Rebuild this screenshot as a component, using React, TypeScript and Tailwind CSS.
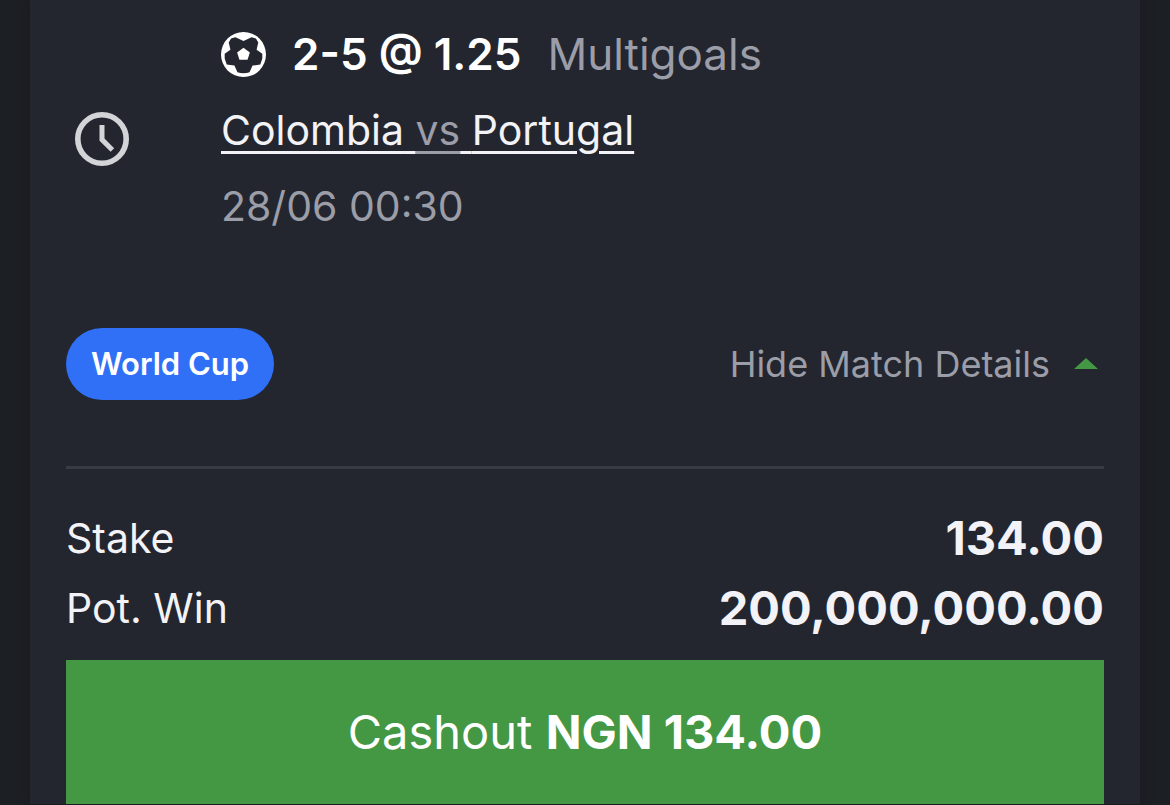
import { useState } from "react";

const totals = [
  { label: "Stake", value: "134.00" },
  { label: "Pot. Win", value: "200,000,000.00" },
];

function ClockIcon() {
  return (
    <svg
      viewBox="0 0 54 54"
      className="w-[54px] h-[54px]"
      fill="none"
      stroke="#d3d4d8"
      aria-hidden="true"
    >
      <circle cx="27" cy="27" r="24.2" strokeWidth="5.6" />
      <path d="M27 13v14.6l10.4 10.4" strokeWidth="5" />
    </svg>
  );
}

function BallIcon() {
  return (
    <svg
      viewBox="-67 -67 134 134"
      className="w-[45px] h-[45px] shrink-0"
      aria-hidden="true"
    >
      <circle r="67" fill="#fff" />
      <path
        fill="#23262e"
        d="M0-40L24-51L37-48L44-36L39-14L56-2L56 12L50 30L27 33L18 53Q0 59-18 53L-27 33L-50 30L-56 12L-56-2L-39-14L-44-36L-37-48L-24-51Z"
      />
      <path fill="#fff" d="M0-20L19-6L12 16H-12L-19-6Z" />
    </svg>
  );
}

export default function App() {
  const [open, setOpen] = useState(true);

  return (
    <div className="min-h-screen bg-[#1c1f23] px-[30px] font-['Inter',sans-serif] text-[#f2f2f7]">
      <main className="bg-[#23262e] px-9 pt-4 shadow-[0_0_10px_#181a22]">
        <section className="flex min-h-[228px]">
          {open && (
            <>
              <div className="w-[155px] shrink-0 pl-[9px] pt-24">
                <ClockIcon />
              </div>
              <div className="leading-[76px] text-[41px]">
                <div className="flex items-center text-[44px]">
                  <BallIcon />
                  <strong className="ml-[26px] font-semibold text-white">
                    2-5 @ 1.25
                  </strong>
                  <span className="ml-[26px] text-[#9b9da8]">Multigoals</span>
                </div>
                <a
                  href="#match"
                  className="block underline decoration-[3px] underline-offset-[6px]"
                >
                  Colombia{" "}
                  <span className="text-[#9b9da8] underline decoration-[3px] underline-offset-[6px]">
                    vs
                  </span>{" "}
                  Portugal
                </a>
                <p className="text-[#9b9da8]">28/06 00:30</p>
              </div>
            </>
          )}
        </section>

        <div className="mt-[84px] flex items-center justify-between">
          <span className="flex h-[72px] items-center rounded-full bg-[#2f70f7] px-[25px] text-[31px] font-semibold text-white">
            World Cup
          </span>
          <button
            onClick={() => setOpen(!open)}
            className="flex items-center gap-6 pr-[6px] text-[36px] text-[#9b9da8]"
          >
            {open ? "Hide" : "Show"} Match Details
            <svg
              viewBox="0 0 24 12"
              className="w-6 h-3"
              fill="#449743"
              aria-hidden="true"
            >
              <path d={open ? "M0 11L12 0l12 11z" : "M0 0l12 11L24 0z"} />
            </svg>
          </button>
        </div>

        <hr className="mt-[66px] border-t-[3px] border-[#383b44]" />

        <dl className="mt-[34px] leading-[70px]">
          {totals.map((row) => (
            <div key={row.label} className="flex items-center justify-between">
              <dt className="text-[41px]">{row.label}</dt>
              <dd className="text-[47px] font-bold">{row.value}</dd>
            </div>
          ))}
        </dl>

        <button className="mt-[17px] h-36 w-full bg-[#449743] text-[47px] text-white">
          Cashout <strong className="font-bold">NGN 134.00</strong>
        </button>
      </main>
    </div>
  );
}
